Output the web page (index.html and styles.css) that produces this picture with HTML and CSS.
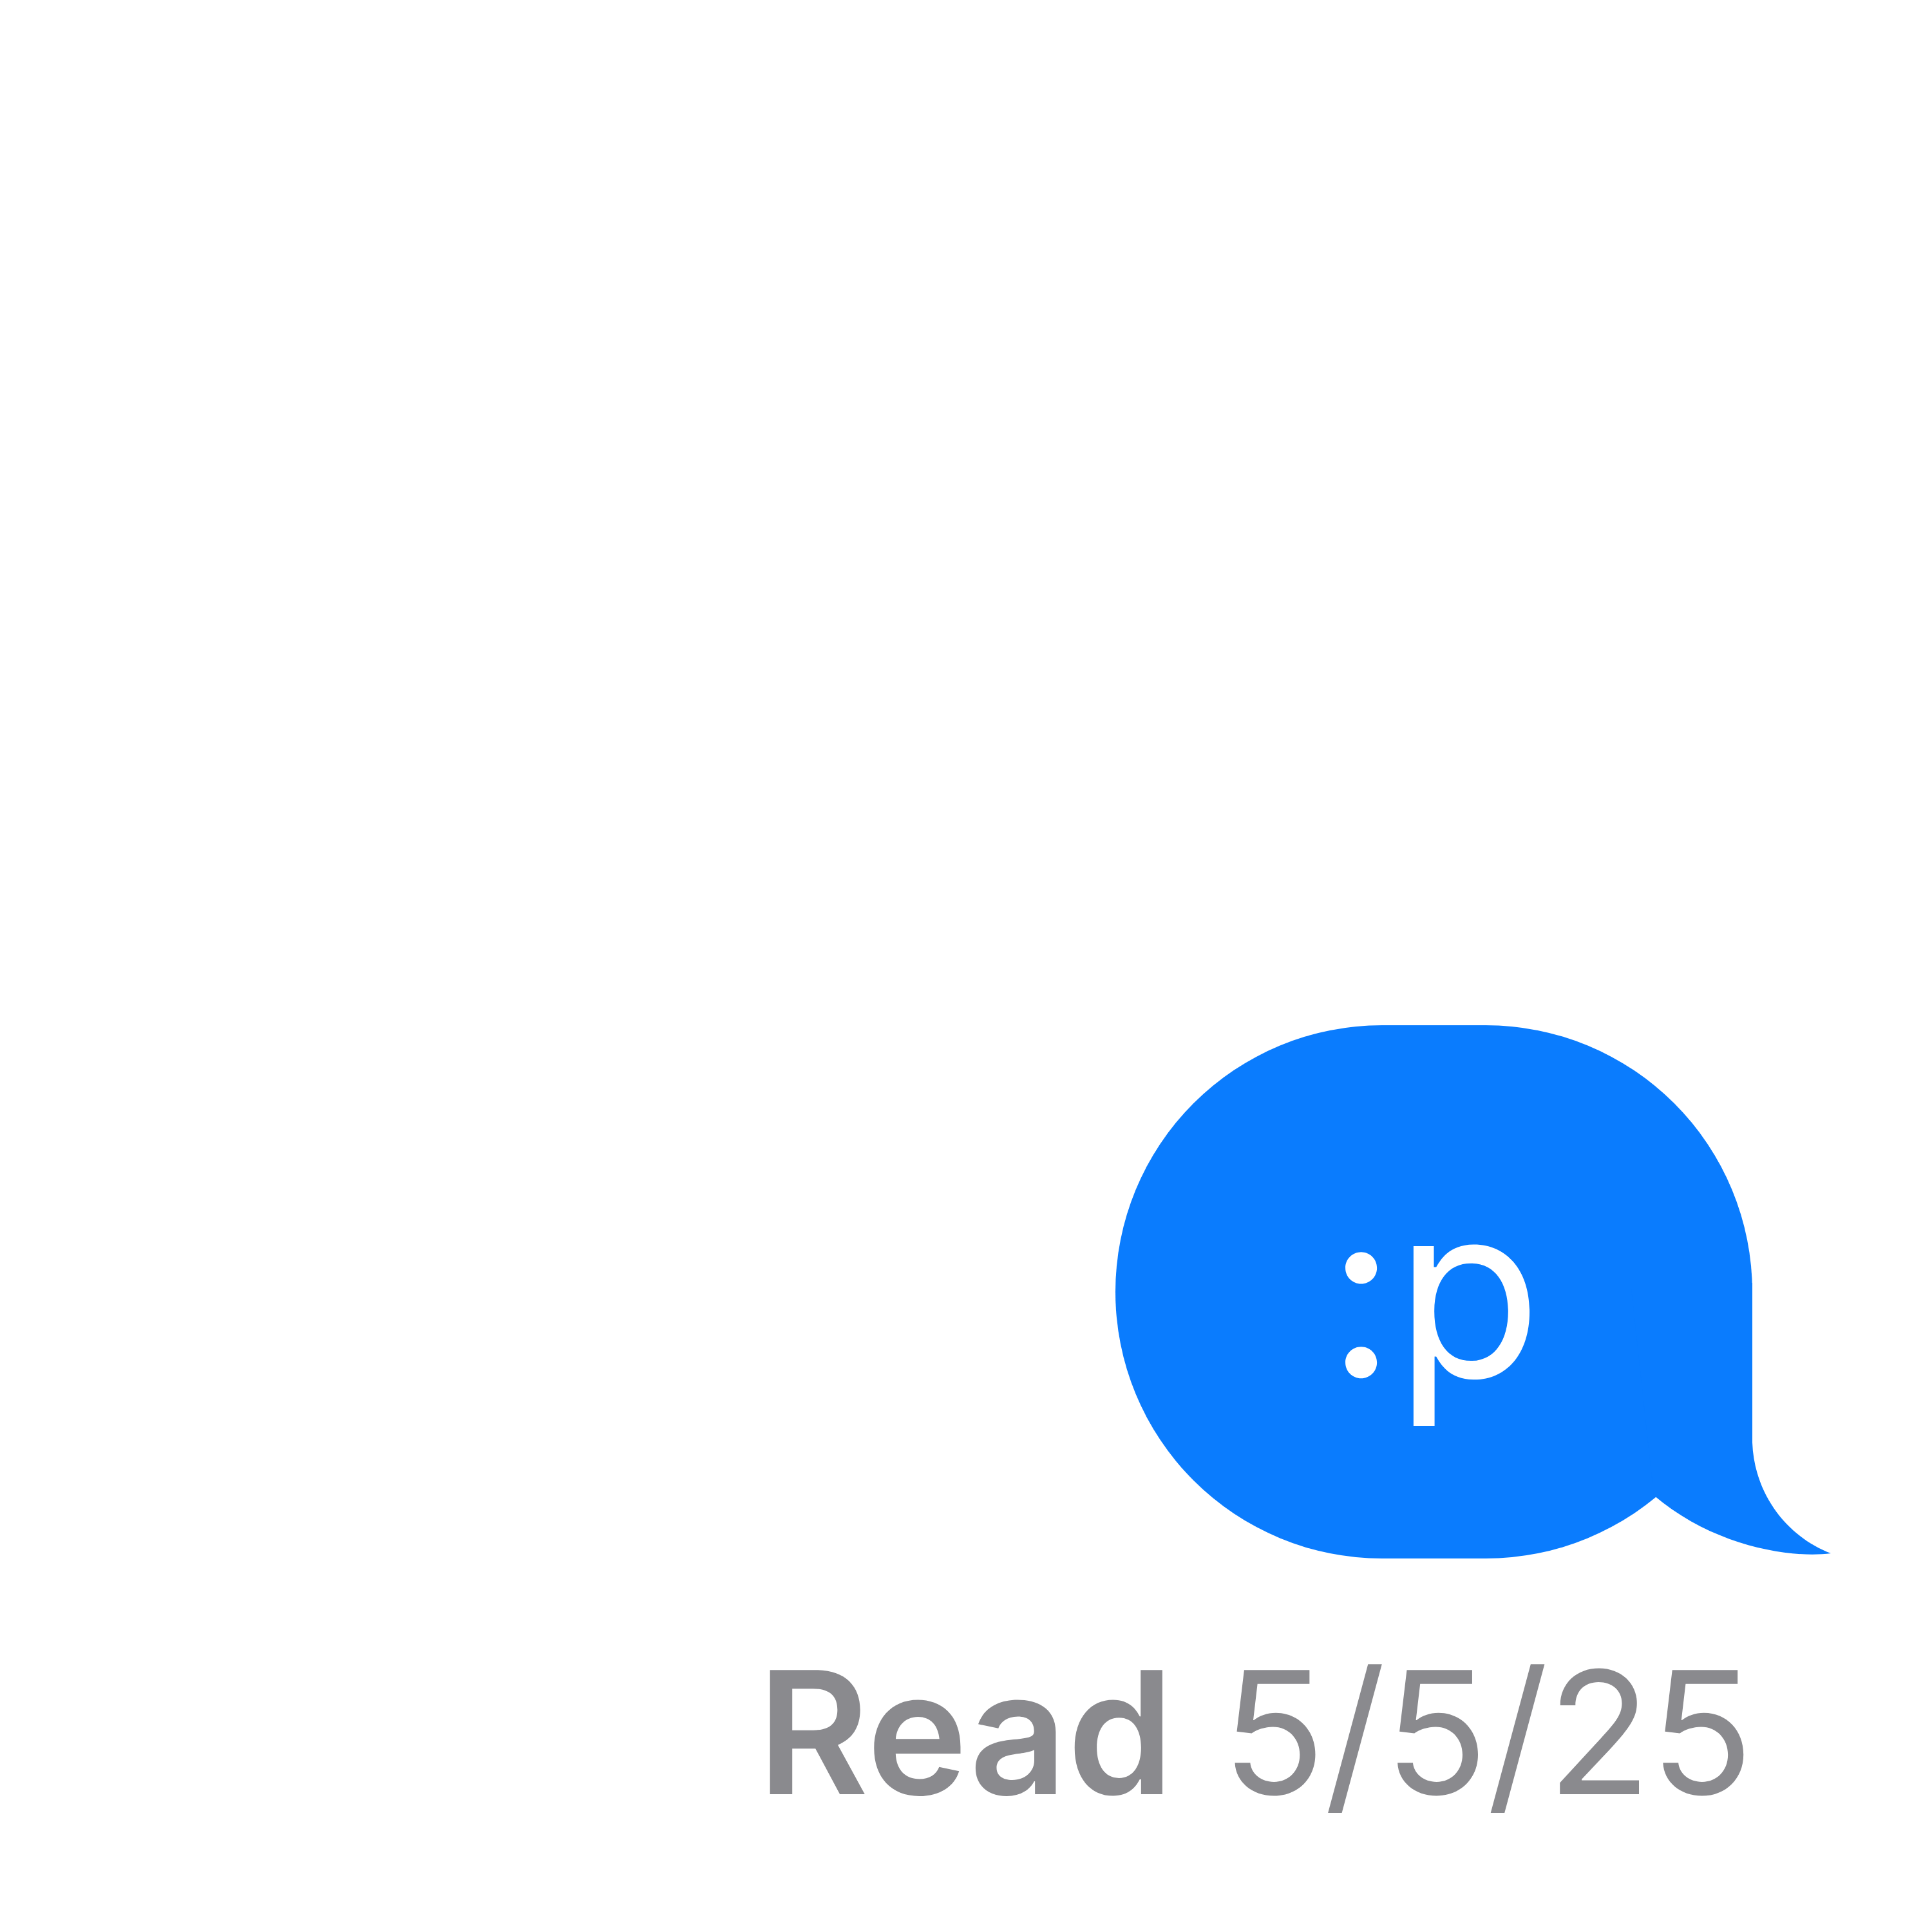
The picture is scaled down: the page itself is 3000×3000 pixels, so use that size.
FILE: index.html
```html
<!DOCTYPE html>
<html lang="en">
<head>
  <meta charset="UTF-8" />
  <meta name="viewport" content="width=device-width, initial-scale=1.0"/>
  <title>Message</title>
  <link rel="stylesheet" href="styles.css">
</head>
<body>

  <div class="thread">
    <div class="bubble">
      <span class="bubble-text">:p</span>
      <svg class="tail" width="330" height="440" viewBox="0 0 330 440">
        <path d="M189 0 L189 248 C192 330 245 395 311 420 C250 428 130 410 36 330 L0 0 Z" fill="#0a7cfe"/>
      </svg>
    </div>
    <div class="receipt"><span class="read">Read</span> <span class="date">5/5/25</span></div>
  </div>

</body>
</html>
```

FILE: styles.css
```css
body {
  margin: 0;
  padding: 0;
  background: #fff;
  font-family: 'Inter', 'Roboto', sans-serif;
}

.thread {
  width: 3000px;
  height: 3000px;
  box-sizing: border-box;
  padding: 1592px 279px 0 0;
  display: flex;
  flex-direction: column;
  align-items: flex-end;
}

.bubble {
  position: relative;
  width: 989px;
  height: 828px;
  border-radius: 414px;
  background: #0a7cfe;
  color: #fff;
  display: flex;
  align-items: center;
  justify-content: center;
  box-sizing: border-box;
  padding-bottom: 6px;
}

.bubble-text {
  font-size: 372px;
  line-height: 1;
  letter-spacing: -1px;
  position: relative;
  z-index: 1;
}

.tail {
  position: absolute;
  left: 800px;
  top: 400px;
}

.receipt {
  margin-top: 137px;
  margin-right: 0;
  font-size: 265px;
  line-height: 1;
  color: #8a8a8e;
  white-space: nowrap;
}

.read {
  font-weight: 600;
}

.date {
  letter-spacing: -2px;
}
```
